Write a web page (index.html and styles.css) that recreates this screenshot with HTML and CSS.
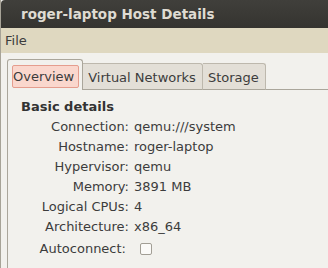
FILE: index.html
```html
<!DOCTYPE html>
<html lang="en">
<head>
    <meta charset="UTF-8">
    <title>roger-laptop Host Details</title>
    <link rel="stylesheet" href="styles.css">
</head>
<body>
    <div class="window">
        <div class="titlebar">roger-laptop Host Details</div>
        <div class="menubar">
            <span class="menu-item">File</span>
        </div>

        <div class="content">
            <div class="notebook">
                <div class="tabs">
                    <div class="tab active"><span class="tab-label">Overview</span></div>
                    <div class="tab"><span class="tab-label">Virtual Networks</span></div>
                    <div class="tab"><span class="tab-label">Storage</span></div>
                    <div class="tab-fill"></div>
                </div>

                <div class="page">
                    <h2>Basic details</h2>
                    <div class="details">
                        <span class="key">Connection:</span><span class="val">qemu:///system</span>
                        <span class="key">Hostname:</span><span class="val">roger-laptop</span>
                        <span class="key">Hypervisor:</span><span class="val">qemu</span>
                        <span class="key">Memory:</span><span class="val">3891 MB</span>
                        <span class="key">Logical CPUs:</span><span class="val">4</span>
                        <span class="key">Architecture:</span><span class="val">x86_64</span>
                    </div>
                    <div class="details options">
                        <span class="key">Autoconnect:</span><span class="val"><span class="checkbox"></span></span>
                    </div>
                </div>
            </div>
        </div>
    </div>
</body>
</html>
```

FILE: styles.css
```css
* {
    margin: 0;
    padding: 0;
    box-sizing: border-box;
    font-family: 'DejaVu Sans', sans-serif;
}

body {
    width: 328px;
    height: 268px;
    overflow: hidden;
    background: #f2f1ed;
}

.window {
    height: 268px;
    display: flex;
    flex-direction: column;
    border-left: 1px solid #a7a397;
}

.titlebar {
    height: 28px;
    padding: 6px 0 0 20px;
    background: linear-gradient(#403f3b, #353430);
    color: #dfdbd2;
    font-size: 13.5px;
    line-height: 16px;
    font-weight: bold;
    border-top-left-radius: 4px;
}

.menubar {
    height: 25px;
    background: #dfd8c0;
    padding: 5px 0 0 4px;
    color: #3c3c3c;
    font-size: 13px;
    line-height: 15px;
}

.content {
    flex: 1;
    padding: 6px 0 0 6px;
    background: #f2f1ed;
}

.notebook {
    height: 100%;
    display: flex;
    flex-direction: column;
}

/* tab strip: 31px, bottom pixel row is the page's top border */
.tabs {
    display: flex;
    align-items: flex-end;
    height: 31px;
}

.tab {
    height: 27px;
    padding: 6px 6px 0 5px;
    background: #e3dfd7;
    border-top: 1px solid #bdb8ad;
    border-right: 1px solid #bdb8ad;
    border-bottom: 1px solid #aaa69b;
    border-radius: 0 3px 0 0;
    color: #3c3c3c;
    font-size: 13px;
    line-height: 15px;
}

.tab:last-of-type {
    padding-right: 5px;
}

.tab.active {
    height: 31px;
    padding: 5px 3px 2px 4px;
    background: #f2f1ed;
    border: 1px solid #aaa69b;
    border-bottom: none;
    border-radius: 3px 3px 0 0;
}

.tab.active .tab-label {
    display: block;
    padding: 3px 4px 3px 0;
    background: #fad7cd;
    border: 1px solid #e59d8e;
    border-radius: 2px;
}

.tab-fill {
    flex: 1;
    border-bottom: 1px solid #aaa69b;
}

.page {
    flex: 1;
    border-left: 1px solid #aaa69b;
    padding: 7px 0 0 13px;
    color: #3c3c3c;
}

h2 {
    font-size: 13px;
    line-height: 20px;
    font-weight: bold;
    color: #333333;
}

.details {
    display: grid;
    grid-template-columns: 108px auto;
    column-gap: 5px;
    font-size: 13px;
    line-height: 20px;
}

.details.options {
    grid-template-columns: 105px auto;
    margin-top: 2px;
}

.key {
    text-align: right;
}

.options .val {
    display: flex;
    align-items: center;
}

.checkbox {
    width: 12px;
    height: 12px;
    margin-left: 9px;
    border: 1px solid #a29e95;
    border-radius: 2px;
    background: #fbfaf8;
}
```
